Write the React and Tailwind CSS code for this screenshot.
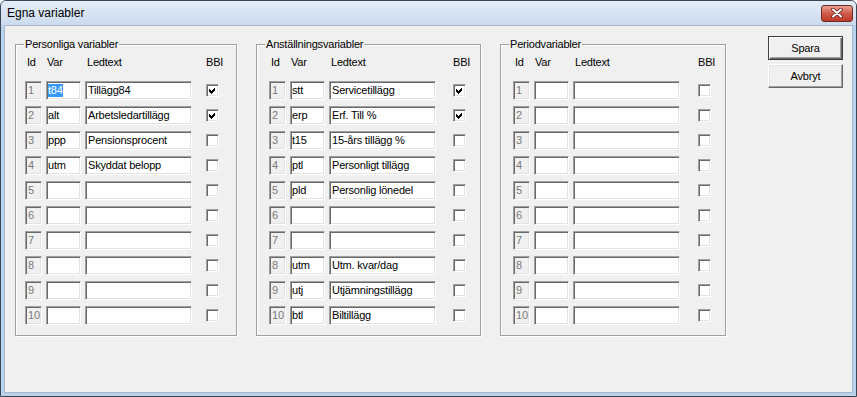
import React from 'react';

const sunken =
  'border border-t-[#a0a0a0] border-l-[#a0a0a0] border-r-white border-b-white shadow-[inset_1px_1px_0_#696969,inset_-1px_-1px_0_#e3e3e3]';

const groups = [
  {
    title: 'Personliga variabler',
    width: 'w-[222px]',
    ml: 'ml-0',
    pl: 'pl-[9px]',
    cb: 'ml-[14px]',
    rows: [
      ['t84', 'Tillägg84', true, true],
      ['alt', 'Arbetsledartillägg', true],
      ['ppp', 'Pensionsprocent', false],
      ['utm', 'Skyddat belopp', false],
    ],
  },
  {
    title: 'Anställningsvariabler',
    width: 'w-[225px]',
    ml: 'ml-[19px]',
    pl: 'pl-[12px]',
    cb: 'ml-[17px]',
    rows: [
      ['stt', 'Servicetillägg', true],
      ['erp', 'Erf. Till %', true],
      ['t15', '15-års tillägg %', false],
      ['ptl', 'Personligt tillägg', false],
      ['pld', 'Personlig lönedel', false],
      ['', '', false],
      ['', '', false],
      ['utm', 'Utm. kvar/dag', false],
      ['utj', 'Utjämningstillägg', false],
      ['btl', 'Biltillägg', false],
    ],
  },
  {
    title: 'Periodvariabler',
    width: 'w-[226px]',
    ml: 'ml-[19px]',
    pl: 'pl-[12px]',
    cb: 'ml-[18px]',
    rows: [],
  },
];

function Check({ checked }) {
  return (
    <div className={`w-[13px] h-[13px] bg-white ${sunken} shrink-0`}>
      {checked && (
        <svg width="11" height="11" viewBox="0 0 11 11" shapeRendering="crispEdges">
          <polygon points="2,4 4,6 8,2 8,5 4,9 2,7" fill="#000" />
        </svg>
      )}
    </div>
  );
}

function Row({ id, v, text, checked, selected, cb }) {
  return (
    <div className="flex items-center h-[19px]">
      <div className={`w-[17px] h-[19px] bg-[#f0f0f0] ${sunken} flex items-center pl-[2px] text-[#7a7a7a]`}>{id}</div>
      <div className={`ml-[4px] w-[35px] h-[19px] bg-white ${sunken} flex items-center pl-[1px]`}>
        {selected ? <span className="bg-[#3399ff] text-white leading-[13px]">{v}</span> : v}
      </div>
      <div className={`ml-[4px] w-[107px] h-[19px] bg-white ${sunken} flex items-center pl-[2px] whitespace-nowrap overflow-hidden`}>{text}</div>
      <div className={`${cb} flex items-center`}>
        <Check checked={checked} />
      </div>
    </div>
  );
}

function Group({ g }) {
  const rows = Array.from({ length: 10 }, (_, i) => g.rows[i] || ['', '', false]);
  return (
    <div
      className={`relative ${g.width} ${g.ml} mt-[18px] h-[292px] border border-[#a0a0a0] shadow-[inset_1px_1px_0_#fff,1px_1px_0_#fff] ${g.pl} pt-[11px]`}
    >
      <div className="absolute -top-[7px] left-[8px] px-[1px] bg-[#f0f0f0] leading-[13px]">{g.title}</div>
      <div className="flex h-[13px] leading-[13px]">
        <div className="w-[17px] pl-[2px]">Id</div>
        <div className="ml-[4px] w-[35px] pl-[1px]">Var</div>
        <div className="ml-[4px] w-[107px] pl-[2px]">Ledtext</div>
        <div className={`${g.cb} -ml-px`}>BBI</div>
      </div>
      <div className="mt-[12px] flex flex-col gap-[6px]">
        {rows.map((r, i) => (
          <Row key={i} id={i + 1} v={r[0]} text={r[1]} checked={r[2]} selected={r[3]} cb={g.cb} />
        ))}
      </div>
    </div>
  );
}

function Button({ children, def }) {
  return (
    <div
      className={`w-[75px] h-[24px] flex items-center justify-center bg-[#f0f0f0] ${
        def
          ? 'border border-[#3c3c3c] shadow-[inset_1px_1px_0_#fff,inset_-1px_-1px_0_#696969,inset_-2px_-2px_0_#a0a0a0]'
          : 'border border-t-white border-l-white border-r-[#696969] border-b-[#696969] shadow-[inset_-1px_-1px_0_#a0a0a0,inset_1px_1px_0_#e3e3e3]'
      }`}
    >
      {children}
    </div>
  );
}

export default function App() {
  return (
    <div
      className="w-[857px] h-[397px] flex flex-col border border-[#3b4654] rounded-t-[6px] bg-[#b7d3ee] text-[11px] tracking-[-0.2px] text-black"
      style={{ fontFamily: '"Liberation Sans", Arial, sans-serif' }}
    >
      {/* titelrad */}
      <div className="h-[24px] flex items-center justify-between pl-[6px] pr-[3px] rounded-t-[5px] bg-gradient-to-b from-[#e4edf8] to-[#cbdaee]">
        <span className="text-[12px] tracking-normal">Egna variabler</span>
        <div className="w-[32px] h-[17px] rounded-[3px] border border-[#6e2b22] bg-gradient-to-b from-[#e6a295] via-[#cf5a48] to-[#c0392b] flex items-center justify-center">
          <svg width="12" height="10" viewBox="0 0 12 10">
            <path d="M2 1.5 L10 8.5 M10 1.5 L2 8.5" stroke="#5a1d16" strokeWidth="3.6" strokeLinecap="round" />
            <path d="M2 1.5 L10 8.5 M10 1.5 L2 8.5" stroke="#fff" strokeWidth="2" strokeLinecap="round" />
          </svg>
        </div>
      </div>
      {/* klientyta */}
      <div className="flex-1 mx-[3px] mb-[3px] bg-[#f0f0f0] border border-[#a9b8c9] flex items-start pl-[10px]">
        {groups.map((g, i) => (
          <Group key={i} g={g} />
        ))}
        <div className="ml-[42px] mt-[10px] flex flex-col gap-[4px]">
          <Button def>Spara</Button>
          <Button>Avbryt</Button>
        </div>
      </div>
    </div>
  );
}
